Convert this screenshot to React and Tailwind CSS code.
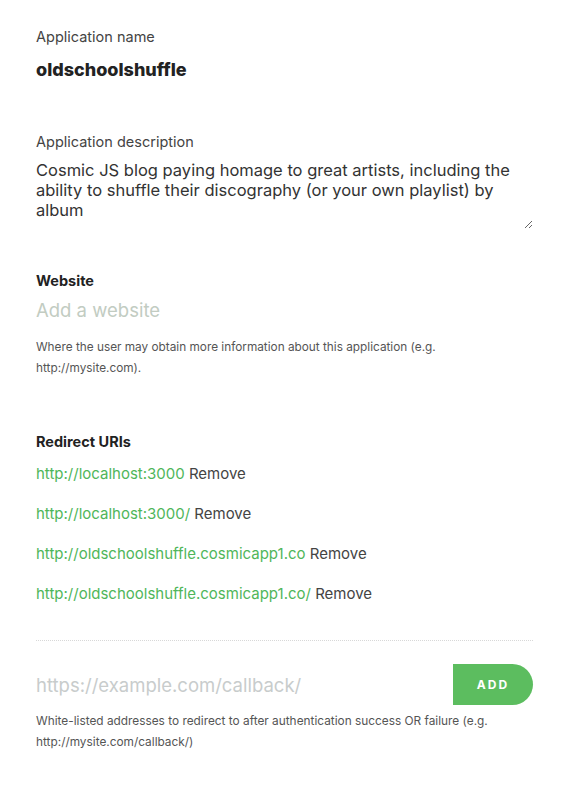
import { useState } from "react";

const uris = [
    "http://localhost:3000",
    "http://localhost:3000/",
    "http://oldschoolshuffle.cosmicapp1.co",
    "http://oldschoolshuffle.cosmicapp1.co/",
];

const App = () => {
    const [description, setDescription] = useState(
        "Cosmic JS blog paying homage to great artists, including the ability to shuffle their discography (or your own playlist) by album"
    );

    return (
        <div
            className="min-h-screen bg-white pl-9 pr-8 pt-[27px] text-[#222]"
            style={{ fontFamily: "Inter, 'Noto Sans', sans-serif" }}
        >
            <div className="text-[14.5px] leading-5 text-[#444]">Application name</div>
            <div className="mt-[11px] text-[18px] font-extrabold leading-6 text-[#222]">
                oldschoolshuffle
            </div>

            <div className="mt-[50px] text-[14.5px] leading-5 text-[#444]">
                Application description
            </div>
            <textarea
                value={description}
                onChange={(e) => setDescription(e.target.value)}
                rows={3}
                className="mt-[8px] block h-[69px] w-full resize-y border-0 p-0 text-[16.5px] leading-5 text-[#333] outline-none"
            />

            <div className="mt-[42px] text-[14.5px] font-bold leading-5 text-[#222]">Website</div>
            <input
                placeholder="Add a website"
                className="mt-[8px] block h-[24px] w-full border-0 p-0 text-[18.5px] text-[#333] outline-none placeholder:text-[#c2ccc2]"
            />
            <p className="mt-[14px] text-[11.8px] leading-[21px] text-[#555]">
                Where the user may obtain more information about this application (e.g.
                <br />
                http://mysite.com).
            </p>

            <div className="mt-[53px] text-[14.5px] font-bold leading-5 text-[#222]">
                Redirect URIs
            </div>
            <ul className="mt-[12px] flex flex-col gap-[20px]">
                {uris.map((uri) => (
                    <li key={uri} className="text-[15px] leading-5">
                        <span className="text-[#4fb65a]">{uri}</span>{" "}
                        <button className="cursor-pointer text-[#444]">Remove</button>
                    </li>
                ))}
            </ul>

            <div className="mt-[36px] border-t border-dotted border-[#d8d8d8]" />

            <div className="mt-[23px] flex items-center">
                <input
                    placeholder="https://example.com/callback/"
                    className="h-[41px] flex-1 border-0 p-0 text-[18.5px] text-[#333] outline-none placeholder:text-[#c8cccc]"
                />
                <button className="h-[41px] w-[80px] rounded-r-full bg-[#5cbd5f] text-[12px] font-bold tracking-[2px] text-white">
                    ADD
                </button>
            </div>
            <p className="mt-[6px] text-[11.85px] leading-[21px] text-[#555]">
                White-listed addresses to redirect to after authentication success OR failure (e.g.
                <br />
                http://mysite.com/callback/)
            </p>
        </div>
    );
};

export default App;
